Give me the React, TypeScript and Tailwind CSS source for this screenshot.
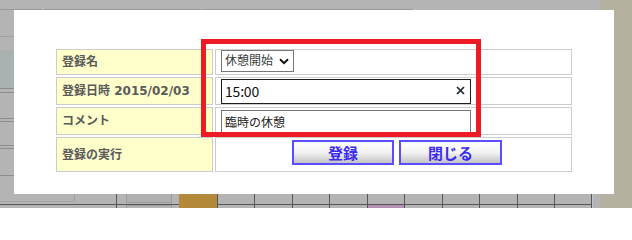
import React from "react";

const jp = { fontFamily: '"Noto Sans CJK JP", "Noto Sans", sans-serif' };
// Meiryo-like: Verdana-ish latin, CJK fallback
const meiryo = { fontFamily: '"DejaVu Sans", "Noto Sans CJK JP", sans-serif' };

type Row = { label: string; height: string };

function ClearIcon() {
  return (
    <svg width="9" height="9" viewBox="0 0 9 9" className="block">
      <path d="M1 1 L8 8 M8 1 L1 8" stroke="#1c2838" strokeWidth="1.7" />
    </svg>
  );
}

function Chevron() {
  return (
    <svg width="10" height="7" viewBox="0 0 10 7" className="block">
      <path d="M1 1.2 L5 5.2 L9 1.2" stroke="#111" strokeWidth="2" fill="none" />
    </svg>
  );
}

function Background() {
  // grid columns of the page behind the dialog (bottom strip)
  const cols = ["w-[37px]", "w-[38px]", "w-[37px]", "w-[38px]", "w-[37px]", "w-[38px]", "w-[37px]", "w-[38px]", "w-[37px]", "w-[37px]"];

  return (
    <div className="flex h-full w-full">
      <div className="flex w-[600px] flex-col">
        {/* top bar */}
        <div className="flex h-[10px] shrink-0 items-end gap-[2px]">
          <div className="h-px w-[42px] bg-[#9a9a9a]" />
          <div className="h-px w-[157px] bg-[#9a9a9a]" />
          <div className="h-px w-[210px] bg-[#9a9a9a]" />
        </div>

        {/* left strip, rest is covered by the dialog */}
        <div className="flex min-h-0 w-[14px] flex-1 flex-col overflow-hidden">
          <div className="h-[26px] shrink-0" />
          <div className="h-px shrink-0 bg-[#a0a0a0]" />
          <div className="h-[13px] shrink-0" />
          <div className="h-[38px] shrink-0 bg-[#a9b2b0]" />
          <div className="h-px shrink-0 bg-[#8c8c8c]" />
          <div className="h-[3px] shrink-0" />
          <div className="h-px shrink-0 bg-[#8c8c8c]" />
          <div className="h-[25px] shrink-0" />
          <div className="h-px shrink-0 bg-[#8c8c8c]" />
          <div className="h-[2px] shrink-0" />
          <div className="h-px shrink-0 bg-[#8c8c8c]" />
          <div className="h-[23px] shrink-0" />
          <div className="h-px shrink-0 bg-[#8c8c8c]" />
          <div className="h-[2px] shrink-0" />
          <div className="h-px shrink-0 bg-[#8c8c8c]" />
          <div className="h-[26px] shrink-0" />
          <div className="h-px shrink-0 bg-[#8c8c8c]" />
        </div>

        {/* bottom grid strip */}
        <div className="flex h-[14px] shrink-0 overflow-hidden">
          <div className="flex w-[117px] flex-col border-r border-[#555]">
            <div className="h-[8px] w-[75px] border-r border-b border-[#a2a2a2]" />
            <div className="h-[2px]" />
            <div className="h-px bg-[#555]" />
          </div>
          <div className="flex w-[62px] flex-col">
            <div className="ml-[9px] h-[9px] w-[46px] border border-t-0 border-[#9c9c9c] bg-[#b0b0b0]" />
            <div className="h-[1px]" />
            <div className="h-px bg-[#555]" />
            <div className="ml-[9px] h-[3px] w-[46px] border border-b-0 border-[#9c9c9c]" />
          </div>
          <div className="w-[39px] border-r border-[#555] bg-[#b5893a]" />
          {cols.map((w, i) => (
            <div key={i} className={`flex ${w} flex-col border-r border-[#555]`}>
              <div className="h-[11px] border-b border-[#555]" />
              <div className={i === 4 ? "flex-1 bg-[#b192b4]" : "flex-1"} />
            </div>
          ))}
          <div className="w-[8px] border-l border-[#c4c4c4]" />
        </div>
      </div>
      <div className="w-[32px] bg-[#b5b1a0]" />
    </div>
  );
}

export default function App() {
  const rows: Row[] = [
    { label: "登録名", height: "h-[26px]" },
    { label: "登録日時 2015/02/03", height: "h-[28px]" },
    { label: "コメント", height: "h-[28px]" },
    { label: "登録の実行", height: "h-[35px]" },
  ];

  const btn =
    "h-[25px] border-2 border-[#5a4cff] bg-gradient-to-b from-white via-[#f2f2f2] to-[#c4c4c4] text-[15px] font-semibold leading-none text-[#3a2bf0]";

  return (
    <div className="relative h-[208px] w-[632px] overflow-hidden bg-[#b4b4b4]" style={jp}>
      <Background />

      {/* dialog */}
      <div className="absolute left-[14px] top-[10px] h-[184px] w-[600px] bg-white px-[40px] pt-[37px]">
        <div className="grid grid-cols-[157px_357px] gap-[2px] p-[2px]">
          {rows.map((r, i) => (
            <React.Fragment key={r.label}>
              <div className={`${r.height} flex items-center border border-[#cccccc] bg-[#ffffcc] pl-[5px]`}>
                <span className="whitespace-nowrap text-[12px] font-bold leading-none text-[#5a5a5a]" style={meiryo}>
                  {r.label}
                </span>
              </div>
              <div className={`${r.height} border border-[#cccccc] pl-[5px]`}>
                {i === 0 && (
                  <div className="flex h-[22px] w-[73px] items-center border border-[#777] pl-[3px]">
                    <span className="whitespace-nowrap text-[12px] leading-none text-[#3a3a3a]" style={meiryo}>
                      休憩開始
                    </span>
                    <span className="ml-[6px]">
                      <Chevron />
                    </span>
                  </div>
                )}
                {i === 1 && (
                  <div className="relative h-[25px] w-[250px]">
                    <input
                      readOnly
                      value="15:00"
                      className="h-full w-full border border-[#1e1e1e] pl-[3px] text-[14px] tracking-[-0.2px] text-[#111] outline-none"
                      style={jp}
                    />
                    <span className="absolute right-[6px] top-[8px]">
                      <ClearIcon />
                    </span>
                  </div>
                )}
                {i === 2 && (
                  <input
                    readOnly
                    value="臨時の休憩"
                    className="mt-px h-[24px] w-[250px] border border-[#777] pl-[3px] text-[12px] text-[#222] outline-none"
                    style={meiryo}
                  />
                )}
                {i === 3 && (
                  <div className="flex justify-center gap-[5px] pl-[2px] pt-[2px]">
                    <button className={`${btn} w-[102px]`} style={jp}>
                      登録
                    </button>
                    <button className={`${btn} w-[103px]`} style={jp}>
                      閉じる
                    </button>
                  </div>
                )}
              </div>
            </React.Fragment>
          ))}
        </div>
      </div>

      {/* red annotation box */}
      <div className="pointer-events-none absolute left-[201px] top-[39px] h-[98px] w-[280px] border-[5px] border-[#ed1c24]" />
    </div>
  );
}
